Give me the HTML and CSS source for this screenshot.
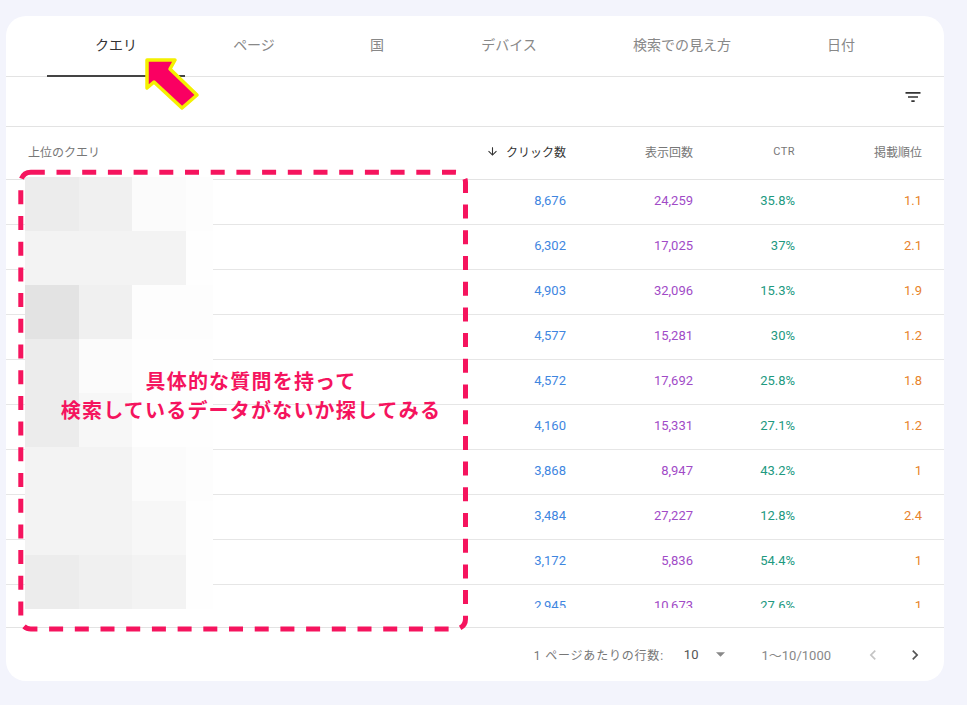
FILE: index.html
```html
<!DOCTYPE html>
<html lang="ja">
<head>
<meta charset="utf-8">
<title>クエリ</title>
<link rel="stylesheet" href="styles.css">
</head>
<body>
<div class="card">
  <nav class="tabs">
    <div class="tab t1 active">クエリ</div>
    <div class="tab t2">ページ</div>
    <div class="tab t3">国</div>
    <div class="tab t4">デバイス</div>
    <div class="tab t5">検索での見え方</div>
    <div class="tab t6">日付</div>
  </nav>
  <div class="toolbar">
    <svg class="filter" viewBox="0 0 24 24"><path d="M10 18h4v-2h-4v2zM3 6v2h18V6H3zm3 7h12v-2H6v2z"/></svg>
  </div>
  <div class="thead">
    <div class="q">上位のクエリ</div>
    <div class="num sort"><svg class="down" viewBox="0 0 24 24"><path d="M20 12l-1.41-1.41L13 16.17V4h-2v12.17l-5.58-5.59L4 12l8 8 8-8z"/></svg>クリック数</div>
    <div class="num">表示回数</div>
    <div class="num ctrh">CTR</div>
    <div class="num">掲載順位</div>
  </div>
  <div class="tbody">
    <div class="row"><div></div><div class="num clk">8,676</div><div class="num imp">24,259</div><div class="num ctr">35.8%</div><div class="num pos">1.1</div></div>
    <div class="row"><div></div><div class="num clk">6,302</div><div class="num imp">17,025</div><div class="num ctr">37%</div><div class="num pos">2.1</div></div>
    <div class="row"><div></div><div class="num clk">4,903</div><div class="num imp">32,096</div><div class="num ctr">15.3%</div><div class="num pos">1.9</div></div>
    <div class="row"><div></div><div class="num clk">4,577</div><div class="num imp">15,281</div><div class="num ctr">30%</div><div class="num pos">1.2</div></div>
    <div class="row"><div></div><div class="num clk">4,572</div><div class="num imp">17,692</div><div class="num ctr">25.8%</div><div class="num pos">1.8</div></div>
    <div class="row"><div></div><div class="num clk">4,160</div><div class="num imp">15,331</div><div class="num ctr">27.1%</div><div class="num pos">1.2</div></div>
    <div class="row"><div></div><div class="num clk">3,868</div><div class="num imp">8,947</div><div class="num ctr">43.2%</div><div class="num pos">1</div></div>
    <div class="row"><div></div><div class="num clk">3,484</div><div class="num imp">27,227</div><div class="num ctr">12.8%</div><div class="num pos">2.4</div></div>
    <div class="row"><div></div><div class="num clk">3,172</div><div class="num imp">5,836</div><div class="num ctr">54.4%</div><div class="num pos">1</div></div>
    <div class="row"><div></div><div class="num clk">2,945</div><div class="num imp">10,673</div><div class="num ctr">27.6%</div><div class="num pos">1</div></div>
  </div>
  <div class="footer">
    <span class="rpp">1 ページあたりの行数:</span>
    <span class="sel">10</span>
    <svg class="drop" viewBox="0 0 10 5"><path d="M0 0h10L5 5z"/></svg>
    <span class="range">1〜10/1000</span>
    <svg class="chev prev" viewBox="0 0 24 24"><path d="M15.41 7.41L14 6l-6 6 6 6 1.41-1.41L10.83 12z"/></svg>
    <svg class="chev next" viewBox="0 0 24 24"><path d="M8.59 16.59L10 18l6-6-6-6-1.41 1.41L13.17 12z"/></svg>
  </div>

  <div class="mosaic">
    <i class="s2"></i><i class="s3"></i><i class="s6"></i><i class="s7"></i>
    <i class="s4"></i><i class="s4"></i><i class="s4"></i><i class="s8"></i>
    <i class="s1"></i><i class="s3"></i><i class="s7"></i><i class="s7"></i>
    <i class="s2"></i><i class="s6"></i><i class="s8"></i><i class="s8"></i>
    <i class="s2"></i><i class="s5"></i><i class="s8"></i><i class="s8"></i>
    <i class="s4"></i><i class="s4"></i><i class="s6"></i><i class="s7"></i>
    <i class="s4"></i><i class="s4"></i><i class="s5"></i><i class="s8"></i>
    <i class="s2"></i><i class="s3"></i><i class="s4"></i><i class="s8"></i>
  </div>

  <svg class="dashbox" viewBox="0 0 455 466">
    <rect x="4.8" y="4.3" width="444.7" height="456.7" rx="10" ry="10"/>
  </svg>

  <div class="note">具体的な質問を持って<br>検索しているデータがないか探してみる</div>

  <svg class="arrow" viewBox="0 0 70 76">
    <polygon points="7,10 35,10 30,19 57,45 42,58 14,32 7,38"/>
  </svg>
</div>
</body>
</html>
```
FILE: styles.css
```css
* { box-sizing: border-box; }

body {
  margin: 0;
  width: 967px;
  height: 705px;
  overflow: hidden;
  background: #f3f4fc;
  font-family: Roboto, "Noto Sans CJK JP", "Noto Sans", sans-serif;
  color: #333;
}

.card {
  position: relative;
  margin: 16px 0 0 6px;
  width: 938px;
  height: 665px;
  background: #fff;
  border-radius: 20px;
  overflow: hidden;
}

/* tabs */
.tabs {
  display: flex;
  height: 61px;
  padding-left: 41px;
  border-bottom: 1px solid #e3e3e3;
}
.tab {
  position: relative;
  display: flex;
  align-items: center;
  justify-content: center;
  padding-bottom: 4px;
  font-size: 14px;
  color: #888;
}
.tab.active { color: #333; }
.tab.active::after {
  content: "";
  position: absolute;
  left: 0;
  right: 0;
  bottom: -1px;
  height: 2px;
  background: #444;
}
.t1 { width: 138px; }
.t2 { width: 138px; }
.t3 { width: 108px; }
.t4 { width: 156px; }
.t5 { width: 190px; }
.t6 { width: 128px; }

/* toolbar */
.toolbar {
  display: flex;
  align-items: center;
  justify-content: flex-end;
  height: 50px;
  padding-right: 21px;
  padding-bottom: 9px;
  border-bottom: 1px solid #e3e3e3;
}
.filter { width: 20px; height: 20px; fill: #333; }

/* table */
.thead, .row {
  display: grid;
  grid-template-columns: 1fr 120px 127px 102px 127px;
  align-items: center;
  padding: 0 22px;
}
.thead {
  height: 53px;
  font-size: 12px;
  color: #777;
  border-bottom: 1px solid #e3e3e3;
  padding-bottom: 4px;
}
.num { text-align: right; }
.sort {
  display: flex;
  align-items: center;
  justify-content: flex-end;
  gap: 7px;
  color: #333;
}
.down { width: 13px; height: 13px; fill: #333; }
.ctrh { font-size: 11px; letter-spacing: 0.5px; }

.tbody {
  height: 428px;
  overflow: hidden;
}
.row {
  height: 45px;
  font-size: 13px;
  border-bottom: 1px solid #e6e6e6;
  padding-bottom: 3px;
}
.clk { color: #3f86df; }
.imp { color: #a14bc7; }
.ctr { color: #21997f; }
.pos { color: #e8832b; }

/* footer */
.footer {
  margin-top: 19px;
  height: 54px;
  display: flex;
  align-items: center;
  justify-content: flex-end;
  padding-right: 19px;
  border-top: 1px solid #e3e3e3;
  font-size: 12px;
  color: #777;
}
.rpp { letter-spacing: 0.8px; }
.sel { margin-left: 20px; font-size: 13px; color: #555; }
.drop { width: 9px; height: 5px; margin-left: 18px; fill: #888; }
.range { margin-left: 36px; font-size: 13px; color: #888; }
.chev { width: 20px; height: 20px; }
.prev { margin-left: 32px; fill: #c4c4c4; }
.next { margin-left: 22px; fill: #555; }

/* pixelated blur over the query column */
.mosaic {
  position: absolute;
  left: 19px;
  top: 161px;
  display: grid;
  grid-template-columns: 54px 53px 54px 27px;
  grid-auto-rows: 54px;
}
.mosaic i { display: block; }
.s1 { background: #e3e3e3; }
.s2 { background: #ececec; }
.s3 { background: #f0f0f0; }
.s4 { background: #f3f3f3; }
.s5 { background: #f7f7f7; }
.s6 { background: #fbfbfb; }
.s7 { background: #fdfdfd; }
.s8 { background: #fefefe; }

/* annotation */
.dashbox {
  position: absolute;
  left: 10px;
  top: 152px;
  width: 455px;
  height: 466px;
}
.dashbox rect {
  fill: none;
  stroke: #f5145e;
  stroke-width: 5;
  stroke-dasharray: 14 11.7;
}
.note {
  position: absolute;
  left: 0;
  top: 350px;
  width: 490px;
  text-align: center;
  font-family: "Noto Sans CJK JP", sans-serif;
  font-weight: 700;
  font-size: 20px;
  letter-spacing: 1.2px;
  line-height: 29px;
  color: #f5145e;
}
.arrow {
  position: absolute;
  left: 134px;
  top: 34px;
  width: 70px;
  height: 76px;
}
.arrow polygon {
  fill: #fa0062;
  stroke: #f4f000;
  stroke-width: 3.5;
  stroke-linejoin: round;
}
```
